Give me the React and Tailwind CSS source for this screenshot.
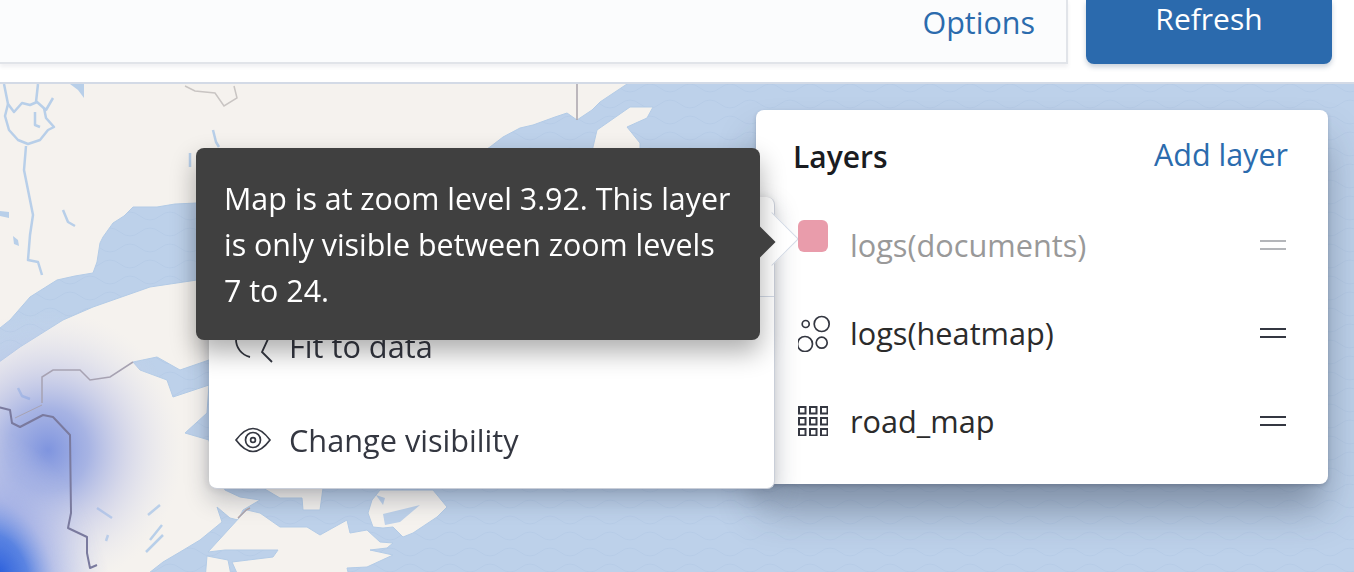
import React from 'react';

const LAND = [
  '-5,80 633,80 612,94 600,102 592,110 577,120 567,113 555,117 533,125 520,128 503,137 490,147 470,160 300,200 197,203 175,204 157,207 133,207 124,216 113,223 103,237 100,243 97,262 93,273 75,276 57,280 30,297 10,320 -5,332',
  '197,280 150,287 93,307 63,320 20,347 -5,365 -5,580 140,580 163,562 180,552 200,540 222,522 217,507 230,518 238,520 243,510 260,500 240,497 225,490 215,470 209,440 185,433 207,413 209,385 173,397 167,380 140,370 133,362 157,357 180,370 209,360 300,300',
  '247,510 260,513 280,527 307,527 320,535 347,520 350,533 367,530 380,542 393,543 387,548 370,550 393,555 367,567 347,568 350,580 240,580 232,562 273,557 278,550 225,550 208,552 240,517',
  '207,556 228,560 232,580 205,580',
  '368,513 372,500 380,490 433,490 447,507 437,517 413,533 403,537 393,527 383,528 373,527',
  '263,488 323,488 320,510 303,510 302,498 280,498',
  '593,147 597,130 630,107 653,107 647,118 627,127 640,143 640,170 590,170',
];

const WATER_BITS = [
  '383,514 420,505 400,522 385,525',
  '376,495 385,498 383,505',
];

const RIVERS = [
  'M8 104 L14 112 L22 103 L30 105 L37 102 L46 110 L53 98',
  'M8 104 L5 116 L9 130 L18 140 L28 144 L40 140 L48 130 L54 127 L46 118 L44 108',
  'M26 146 L24 170 L28 190 L33 215 L30 235 L28 260 L38 262 L42 275',
  'M4 84 L8 104 M38 84 L36 102',
  'M35 112 L35 125 L40 127',
  'M213 130 L216 142 L219 147',
  'M190 153 L190 167',
  'M63 210 L68 222 L75 226',
  'M18 388 L22 396 L30 399',
  'M97 508 L112 518',
  'M108 535 L106 541',
  'M148 515 L160 505 M150 540 L162 525 M146 552 L163 535',
];

function MapBackground() {
  return (
    <svg className="absolute inset-0 w-full h-full" viewBox="0 84 1354 488">
      <defs>
        <pattern id="waves" width="40" height="32" patternUnits="userSpaceOnUse">
          <path d="M0 8 Q10 16 20 8 T40 8" fill="none" stroke="#aec6e2" strokeWidth="1" opacity="0.45" />
          <path d="M-20 24 Q-10 32 0 24 T20 24 T40 24 T60 24" fill="none" stroke="#aec6e2" strokeWidth="1" opacity="0.45" />
        </pattern>
        <radialGradient id="heatA">
          <stop offset="0%" stopColor="#6a84dc" stopOpacity="0.85" />
          <stop offset="30%" stopColor="#7d92de" stopOpacity="0.65" />
          <stop offset="60%" stopColor="#aeb6e4" stopOpacity="0.4" />
          <stop offset="100%" stopColor="#dcdfee" stopOpacity="0" />
        </radialGradient>
        <radialGradient id="heatB">
          <stop offset="0%" stopColor="#2f62dc" stopOpacity="1" />
          <stop offset="25%" stopColor="#4a78e0" stopOpacity="0.9" />
          <stop offset="50%" stopColor="#8d9fe4" stopOpacity="0.55" />
          <stop offset="100%" stopColor="#c9cfec" stopOpacity="0" />
        </radialGradient>
      </defs>
      <rect x="0" y="84" width="1354" height="488" fill="#bdd1ea" />
      <rect x="0" y="84" width="1354" height="488" fill="url(#waves)" />
      <g className="blur-[0.7px]">
        {LAND.map((pts, i) => (
          <polygon key={i} points={pts} fill="#f5f2ee" stroke="#b3cbe6" strokeWidth="1" strokeLinejoin="round" />
        ))}
        {WATER_BITS.map((pts, i) => (
          <polygon key={i} points={pts} fill="#bdd1ea" />
        ))}
        {RIVERS.map((d, i) => (
          <path key={i} d={d} fill="none" stroke="#b8cfe9" strokeWidth="2.5" strokeLinejoin="round" />
        ))}
        <polygon points="70,84 84,84 84,98 78,90" fill="#b8cfe9" />
        <polygon points="0,211 9,212 9,218 0,216" fill="#b8cfe9" />
        <polygon points="13,236 18,240 19,246 14,244" fill="#b8cfe9" />
        <path d="M185 86 L195 91 L215 93 L224 106 L237 98 L234 86" fill="none" stroke="#c9c5c3" strokeWidth="1.5" />
        <path d="M577 84 L577 120" stroke="#a9a3ab" strokeWidth="1.5" />
        <path d="M238 518 L246 510 L250 508" fill="none" stroke="#b5a6a8" strokeWidth="1.5" />
        <ellipse cx="48" cy="450" rx="135" ry="140" fill="url(#heatA)" />
        <ellipse cx="0" cy="572" rx="105" ry="155" fill="url(#heatB)" transform="rotate(-22 0 572)" />
        <path d="M42 403 L42 377 L53 370 L80 370 L90 380 L110 377 L133 362" fill="none" stroke="#a7a2b2" strokeWidth="1.5" />
        <path d="M15 418 L42 405" fill="none" stroke="#a7a2b2" strokeWidth="1" />
        <path d="M-2 407 L10 410 L12 423 L20 427 L43 415 L53 417 L70 435 L71 513 L68 528 L87 537 L87 553 L90 568 L97 565" fill="none" stroke="#7a7a9e" strokeWidth="2" strokeLinejoin="round" />
      </g>
    </svg>
  );
}

function DragHandle({ muted }) {
  const color = muted ? 'bg-[#b4b6ba]' : 'bg-[#343741]';
  return (
    <div className="flex flex-col gap-[6px] w-[26px]">
      <div className={`h-[2px] ${color}`}></div>
      <div className={`h-[2px] ${color}`}></div>
    </div>
  );
}

function HeatmapIcon() {
  return (
    <svg width="34" height="38" viewBox="0 0 34 38" fill="none" stroke="#343741" strokeWidth="1.7">
      <circle cx="7.7" cy="10" r="3.5" />
      <circle cx="23.7" cy="10" r="7.5" />
      <circle cx="7" cy="30" r="7.5" />
      <circle cx="23.7" cy="28.7" r="5.5" />
    </svg>
  );
}

function GridIcon() {
  const cells = [0, 11, 22];
  return (
    <svg width="30" height="30" viewBox="0 0 30 30" fill="none" stroke="#343741" strokeWidth="2">
      {cells.map(y => cells.map(x => (
        <rect key={`${x}-${y}`} x={x + 1} y={y + 1} width="6.5" height="6.5" />
      )))}
    </svg>
  );
}

function EyeIcon() {
  return (
    <svg width="36" height="26" viewBox="0 0 36 26" fill="none" stroke="#343741" strokeWidth="1.7">
      <path d="M1 13 C7 5 12 1.5 18 1.5 C24 1.5 29 5 35 13 C29 21 24 24.5 18 24.5 C12 24.5 7 21 1 13 Z" />
      <circle cx="18" cy="13" r="7.5" />
      <circle cx="18" cy="13" r="2.4" />
    </svg>
  );
}

function FitIcon() {
  return (
    <svg width="40" height="44" viewBox="0 0 40 44" fill="none" stroke="#343741" strokeWidth="1.8">
      <path d="M34 15 A18 18 0 0 0 2 15 A18 18 0 0 0 16 33" />
      <path d="M34 15 L28 28 L38 38" />
    </svg>
  );
}

function LayerRow({ icon, name, muted }) {
  return (
    <div className="flex items-center h-[88px] pl-[42px] pr-[42px]">
      <div className="w-[53px] shrink-0 relative z-30">{icon}</div>
      <span className={`flex-1 -ml-[1px] text-[30.7px] ${muted ? 'text-[#999999]' : 'text-[#2b2b2b]'}`}>{name}</span>
      <DragHandle muted={muted} />
    </div>
  );
}

export default function App() {
  return (
    <div className="w-[1354px] h-[572px] flex flex-col overflow-hidden bg-white font-['Open_Sans',sans-serif]">
      {/* Top bar */}
      <div className="h-[84px] shrink-0 flex items-start border-b-2 border-[#d3dae6]">
        <div className="w-[1068px] h-[64px] pb-[18px] pr-[31px] flex items-center justify-end bg-[#fbfcfd] border-r-2 border-b-2 border-[#e1e4e9] shadow-[0_3px_4px_rgba(60,70,90,0.08)]">
          <span className="text-[30.5px] leading-[40px] text-[#2b6bad]">Options</span>
        </div>
        <button className="ml-[18px] w-[246px] h-[64px] pb-[26px] flex items-center justify-center bg-[#2b6aad] text-white text-[30px] leading-[36px] font-medium rounded-b-lg shadow-[0_3px_5px_rgba(40,70,110,0.25)]">
          Refresh
        </button>
      </div>

      {/* Map */}
      <div className="relative flex-1">
        <MapBackground />

        {/* Layers panel */}
        <div className="absolute left-[756px] top-[26px] w-[572px] h-[374px] bg-white rounded-lg shadow-[0_28px_40px_-4px_rgba(30,40,60,0.42),0_2px_4px_rgba(30,40,60,0.2)]">
          <div className="h-[91px] pl-[37px] pr-[40px] flex items-center justify-between">
            <span className="text-[30px] font-semibold text-[#1a1c21] translate-y-[1px]">Layers</span>
            <span className="text-[30.5px] text-[#2b6bad] -translate-y-[1px]">Add layer</span>
          </div>
          <LayerRow muted name="logs(documents)" icon={<div className="w-[30px] h-[32px] rounded-md bg-[#e99cab] -translate-y-[9px]"></div>} />
          <LayerRow name="logs(heatmap)" icon={<HeatmapIcon />} />
          <LayerRow name="road_map" icon={<GridIcon />} />
        </div>

        {/* Layer action menu */}
        <div className="absolute z-20 left-[209px] top-[113px] w-[566px] h-[292px] bg-white rounded-lg border-r border-b border-[#c9ced8] shadow-[0_10px_24px_rgba(30,40,60,0.28),-2px_0_10px_rgba(30,40,60,0.1)]">
          <div className="absolute right-[-17px] top-[23px] w-[38px] h-[38px] rotate-45 bg-white border-t border-r border-[#d3dae6]"></div>
          <div className="relative h-[100px] border-b border-[#d3dae6]"></div>
          <div className="h-[94px] pt-[4px] pl-[25px] flex items-center gap-[15px] text-[30.7px] text-[#343741]">
            <FitIcon />
            <span>Fit to data</span>
          </div>
          <div className="h-[94px] pt-[4px] pl-[26px] flex items-center gap-[18px] text-[30.7px] text-[#343741]">
            <EyeIcon />
            <span>Change visibility</span>
          </div>
        </div>

        {/* Tooltip */}
        <div className="absolute z-30 left-[196px] top-[64px] w-[564px] h-[192px] pl-[28px] py-[28px] bg-[#404040] rounded-lg text-white text-[30.4px] leading-[46px] shadow-[0_12px_26px_rgba(0,0,0,0.32)]">
          Map is at zoom level 3.92. This layer<br />
          is only visible between zoom levels<br />
          7 to 24.
          <div className="absolute right-[-11px] top-[83px] w-[22px] h-[22px] rotate-45 bg-[#404040]"></div>
        </div>
      </div>
    </div>
  );
}
